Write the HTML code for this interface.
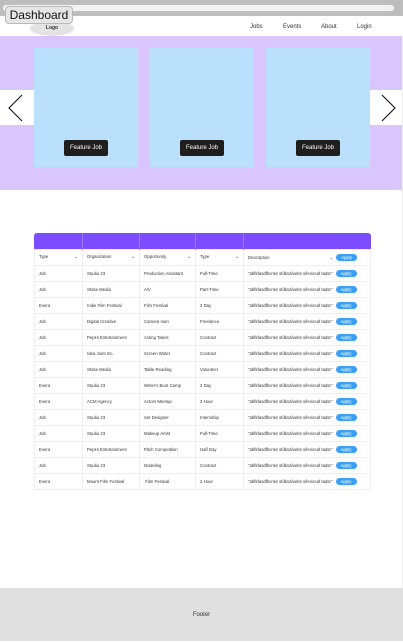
<!DOCTYPE html>
<html><head><meta charset="utf-8"><style>
*{margin:0;padding:0;box-sizing:border-box}
body{width:403px;height:641px;position:relative;background:#fff;font-family:"Liberation Sans",sans-serif;overflow:hidden}
.abs{position:absolute}
.topbar{left:0;top:0;width:403px;height:16px;background:#bdbdbd}
.urlbar{left:3px;top:5px;width:391px;height:6px;background:#f3f3f3;border-radius:3px}
.dash{left:5px;top:6px;width:68px;height:18px;background:#e6e6e6;border:1px solid #b8b8b8;border-radius:4px;font-size:12px;line-height:16px;text-align:center;color:#111}
.logo{left:30px;top:21px;width:44px;height:15px;background:#e3e3e3;border-radius:50%;font-size:5px;text-align:center;line-height:14px;color:#333;font-weight:bold}
.nav{top:24px;font-size:6px;color:#333}
.hero{left:0;top:36px;width:402px;height:154px;background:#d9c6fd}
.card{top:48px;width:104px;height:119px;background:#bbe0fc}
.fj{top:140px;width:44px;height:16px;background:#1e1e1e;color:#fff;font-size:6px;line-height:16px;text-align:center;border-radius:2px}
.arr{top:90px;width:34px;height:35px;background:#fff}
.thead{left:34px;top:233px;width:337px;height:16px;background:#7c4dff;border-radius:3px 3px 0 0}
table{position:absolute;left:34px;top:233px;width:337px;border-collapse:collapse;font-size:4.3px;color:#333}
th{height:16px;border-right:1px solid #9b78ff}
td{height:16px;border:1px solid #efefef;padding-left:4px;white-space:nowrap}
.ap{display:inline-block;background:#3ba0f5;color:#fff;border-radius:4px;width:21px;height:7px;line-height:7px;text-align:center;margin-left:3px}
.footer{left:0;top:588px;width:403px;height:53px;background:#e0e0e0;font-size:6px;text-align:center;line-height:54px;color:#333}
.rline{left:402px;top:36px;width:1px;height:552px;background:#eee}
</style></head><body>
<div class="abs topbar"></div><div class="abs urlbar"></div>
<div class="abs logo">Logo</div>
<div class="abs dash">Dashboard</div>
<div class="abs nav" style="left:250px">Jobs</div>
<div class="abs nav" style="left:283px">Events</div>
<div class="abs nav" style="left:321px">About</div>
<div class="abs nav" style="left:357px">Login</div>
<div class="abs hero"></div>
<div class="abs card" style="left:34px"></div>
<div class="abs card" style="left:150px"></div>
<div class="abs card" style="left:266px"></div>
<div class="abs fj" style="left:64px">Feature Job</div>
<div class="abs fj" style="left:180px">Feature Job</div>
<div class="abs fj" style="left:296px">Feature Job</div>
<div class="abs arr" style="left:0"><svg width="34" height="35"><path d="M22 5 L9 18 L22 31" fill="none" stroke="#111" stroke-width="1.1"/></svg></div>
<div class="abs arr" style="left:370px"><svg width="34" height="35"><path d="M12 5 L25 18 L12 31" fill="none" stroke="#111" stroke-width="1.1"/></svg></div>
<div class="abs rline"></div>
<div class="abs thead"></div>
<table>
<tr><th style="width:48px"></th><th style="width:57px"></th><th style="width:56px"></th><th style="width:48px"></th><th style="border-right:0"></th></tr>
<tr><td>Type<span style="float:right;margin-right:4px">⌄</span></td><td>Organization<span style="float:right;margin-right:4px">⌄</span></td><td>Opportunity<span style="float:right;margin-right:4px">⌄</span></td><td>Type<span style="float:right;margin-right:4px">⌄</span></td><td>Description<span style="margin-left:60px">⌄</span><span class="ap">Apply</span></td></tr>
<tr><td>Job</td><td>Studio 23</td><td>Production Assistant</td><td>Full-Time</td><td>"abfkfasdfkcnks sfdksafvebs sifenecaf tadsr"<span class="ap">Apply</span></td></tr>
<tr><td>Job</td><td>Stoke Media</td><td>A/V</td><td>Part-Time</td><td>"abfkfasdfkcnks sfdksafvebs sifenecaf tadsr"<span class="ap">Apply</span></td></tr>
<tr><td>Event</td><td>Indie Film Festival</td><td>Film Festival</td><td>3 Day</td><td>"abfkfasdfkcnks sfdksafvebs sifenecaf tadsr"<span class="ap">Apply</span></td></tr>
<tr><td>Job</td><td>Digital Creative</td><td>Camera man</td><td>Freelance</td><td>"abfkfasdfkcnks sfdksafvebs sifenecaf tadsr"<span class="ap">Apply</span></td></tr>
<tr><td>Job</td><td>PepHi Entertainment</td><td>Acting Talent</td><td>Contract</td><td>"abfkfasdfkcnks sfdksafvebs sifenecaf tadsr"<span class="ap">Apply</span></td></tr>
<tr><td>Job</td><td>Idea Joint Inc.</td><td>Screen Writer</td><td>Contract</td><td>"abfkfasdfkcnks sfdksafvebs sifenecaf tadsr"<span class="ap">Apply</span></td></tr>
<tr><td>Job</td><td>Stoke Media</td><td>Table Reading</td><td>Volunteer</td><td>"abfkfasdfkcnks sfdksafvebs sifenecaf tadsr"<span class="ap">Apply</span></td></tr>
<tr><td>Event</td><td>Studio 23</td><td>Writer's Boot Camp</td><td>2 Day</td><td>"abfkfasdfkcnks sfdksafvebs sifenecaf tadsr"<span class="ap">Apply</span></td></tr>
<tr><td>Event</td><td>ACM Agency</td><td>Actors Meetup</td><td>3 Hour</td><td>"abfkfasdfkcnks sfdksafvebs sifenecaf tadsr"<span class="ap">Apply</span></td></tr>
<tr><td>Job</td><td>Studio 23</td><td>Set Designer</td><td>Internship</td><td>"abfkfasdfkcnks sfdksafvebs sifenecaf tadsr"<span class="ap">Apply</span></td></tr>
<tr><td>Job</td><td>Studio 23</td><td>Makeup Artist</td><td>Full-Time</td><td>"abfkfasdfkcnks sfdksafvebs sifenecaf tadsr"<span class="ap">Apply</span></td></tr>
<tr><td>Event</td><td>PepHi Entertainment</td><td>Pitch Competition</td><td>Half Day</td><td>"abfkfasdfkcnks sfdksafvebs sifenecaf tadsr"<span class="ap">Apply</span></td></tr>
<tr><td>Job</td><td>Studio 23</td><td>Modeling</td><td>Contract</td><td>"abfkfasdfkcnks sfdksafvebs sifenecaf tadsr"<span class="ap">Apply</span></td></tr>
<tr><td>Event</td><td>Mount Film Festival</td><td>&nbsp;Film Festival</td><td>2 Hour</td><td>"abfkfasdfkcnks sfdksafvebs sifenecaf tadsr"<span class="ap">Apply</span></td></tr>
</table>
<div class="abs footer">Footer</div>
</body></html>
